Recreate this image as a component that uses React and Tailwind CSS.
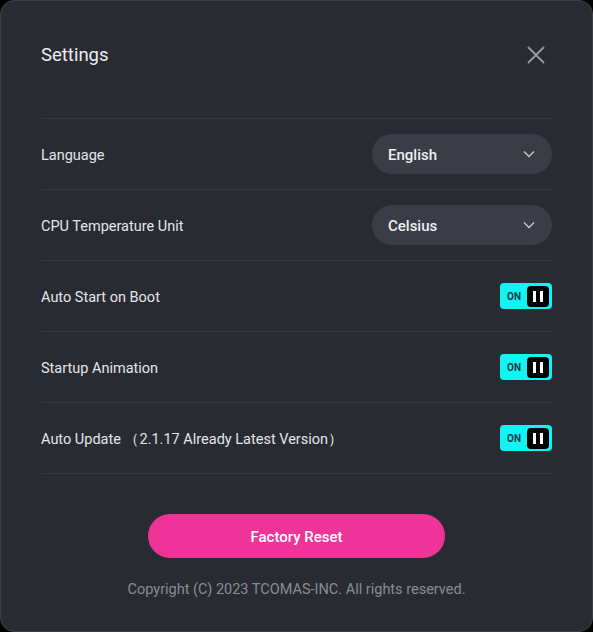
import React from "react";

function Chevron() {
  return (
    <svg width="12" height="8" viewBox="0 0 12 8" fill="none">
      <path d="M1 1.5 L6 6.5 L11 1.5" stroke="#c9cbd1" strokeWidth="1.3" />
    </svg>
  );
}

function Select({ value }) {
  return (
    <div className="flex h-[40px] w-[180px] items-center justify-between rounded-full bg-[#3b3d46] pl-4 pr-[17px]">
      <span className="pt-[2px] text-[15px] font-medium text-[#eeeff2]">{value}</span>
      <Chevron />
    </div>
  );
}

function Toggle() {
  return (
    <div className="flex h-[26px] w-[52px] items-center justify-between rounded-[4px] bg-[#12f3f3] pl-[7px] pr-[3px]">
      <span className="text-[10px] font-bold text-[#1b3a44]">ON</span>
      <div className="flex h-[21px] w-[22px] items-center justify-center gap-[4px] rounded-[4px] bg-black">
        <div className="h-[11px] w-[3px] bg-white" />
        <div className="h-[11px] w-[3px] bg-white" />
      </div>
    </div>
  );
}

function Row({ label, children }) {
  return (
    <div className="flex h-[71px] items-center justify-between border-b border-[#363841]">
      <span className="pt-[4px] text-[14.5px] text-[#e4e5e9]">{label}</span>
      {children}
    </div>
  );
}

export default function App() {
  return (
    <div className="h-[632px] w-[593px] bg-black" style={{ fontFamily: "Roboto, 'Noto Sans', sans-serif" }}>
      <div className="flex h-full w-full flex-col rounded-[14px] border border-[#3c3e46] bg-[#292b33] px-[40px]">
        <div className="flex h-[118px] shrink-0 items-center justify-between border-b border-[#363841] pb-[10px]">
          <span className="pt-[2px] text-[18.5px] text-[#eceef1]">Settings</span>
          <svg width="18" height="18" viewBox="0 0 18 18" className="mr-[7px]">
            <path d="M1 1 L17 17 M17 1 L1 17" stroke="#9a9ca3" strokeWidth="1.8" />
          </svg>
        </div>
        <Row label="Language"><Select value="English" /></Row>
        <Row label="CPU Temperature Unit"><Select value="Celsius" /></Row>
        <Row label="Auto Start on Boot"><Toggle /></Row>
        <Row label="Startup Animation"><Toggle /></Row>
        <Row label="Auto Update （2.1.17 Already Latest Version）"><Toggle /></Row>
        <div className="flex flex-col items-center pt-[40px]">
          <button className="flex h-[44px] w-[297px] items-center justify-center rounded-full bg-[#ee3399] pt-[2px] text-[15px] font-medium text-white">
            Factory Reset
          </button>
          <p className="mt-[21px] text-[14.5px] text-[#8a8c93]">Copyright (C) 2023 TCOMAS-INC. All rights reserved.</p>
        </div>
      </div>
    </div>
  );
}
